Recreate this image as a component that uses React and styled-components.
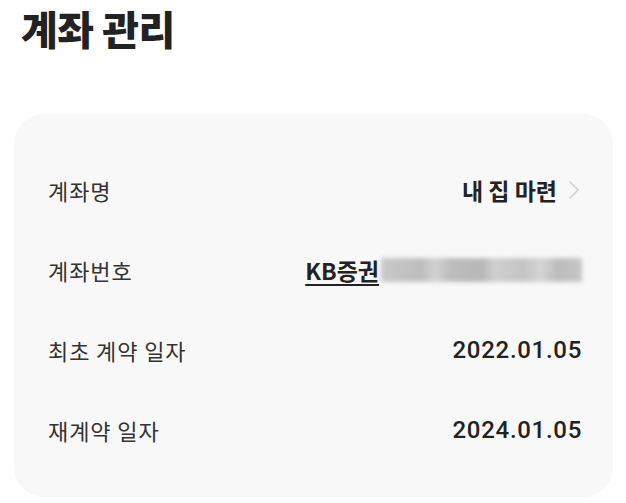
import styled, { createGlobalStyle } from "styled-components"

const Global = createGlobalStyle`
  body {
    margin: 0;
    background: #ffffff;
    font-family: "Noto Sans CJK KR", "Noto Sans", sans-serif;
    color: #222;
  }
`

const Page = styled.div`
  width: 626px;
  height: 503px;
  overflow: hidden;
`

const Title = styled.h1`
  margin: 0;
  padding-left: 21px;
  font-size: 40px;
  line-height: 56px;
  font-weight: 800;
  color: #222;
  letter-spacing: -0.5px;
`

const Card = styled.div`
  margin: 58px 13px 0 14px;
  padding: 36px 31px 27px 34px;
  background: #f8f8f8;
  border-radius: 30px;
`

const Row = styled.div`
  height: 80px;
  display: flex;
  align-items: center;
  justify-content: space-between;
`

const Label = styled.span`
  font-size: 22px;
  letter-spacing: 0.9px;
  color: #333;
  font-weight: 400;
`

const Value = styled.span`
  display: flex;
  align-items: center;
  gap: ${(p) => (p.tight ? "0" : "11px")};
  font-size: ${(p) => (p.num ? "24px" : "23px")};
  letter-spacing: ${(p) => (p.num ? "0.7px" : "0")};
  font-family: ${(p) => (p.num ? `"Roboto", "Noto Sans CJK KR", sans-serif` : "inherit")};
  font-weight: ${(p) => (p.num ? 500 : 700)};
  color: #222;
`

const Link = styled.span`
  text-decoration: underline;
  text-decoration-thickness: 2px;
  text-underline-offset: 4px;
`

const Blur = styled.span`
  width: 201px;
  height: 24px;
  margin-left: 2px;
  background: linear-gradient(90deg, #c9c9c9 0%, #bdbdbd 20%, #d2d2d2 27%, #bcbcbc 35%, #b8b8b8 50%, #d0d0d0 57%, #c4c4c4 70%, #d4d4d4 80%, #bcbcbc 88%, #c6c6c6 100%);
  filter: blur(2px);
`

const Chevron = () => (
  <svg width="14" height="20" viewBox="0 0 14 20" fill="none">
    <path d="M2 2l8 8-8 8" stroke="#cfcfcf" strokeWidth="1.5" strokeLinecap="round" strokeLinejoin="round" />
  </svg>
)

export default function App() {
  return (
    <Page>
      <Global />
      <Title>계좌 관리</Title>
      <Card>
        <Row>
          <Label>계좌명</Label>
          <Value>내 집 마련<Chevron /></Value>
        </Row>
        <Row>
          <Label>계좌번호</Label>
          <Value tight><Link>KB증권</Link><Blur /></Value>
        </Row>
        <Row>
          <Label>최초 계약 일자</Label>
          <Value num>2022.01.05</Value>
        </Row>
        <Row>
          <Label>재계약 일자</Label>
          <Value num>2024.01.05</Value>
        </Row>
      </Card>
    </Page>
  )
}
